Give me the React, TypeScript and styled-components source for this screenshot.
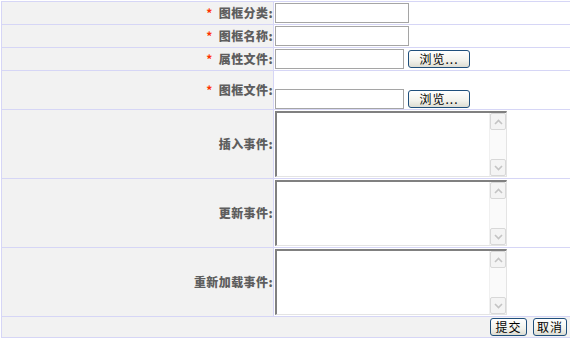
import React from "react";
import styled, { createGlobalStyle } from "styled-components";

const GlobalStyle = createGlobalStyle`
  html, body {
    margin: 0;
    padding: 0;
    overflow: hidden;
    background: #fff;
  }
  body {
    font-family: "Noto Sans CJK SC", "DejaVu Sans", sans-serif;
    font-size: 12px;
  }
`;

const Page = styled.div`
  padding: 1px 0 0 1px;
`;

const FormTable = styled.table`
  width: 572px;
  border-collapse: collapse;
  border: 1px solid #d6d6f6;
  td {
    border: 1px solid #d6d6f6;
    padding: 0;
  }
`;

const Row = styled.tr<{ h: number }>`
  height: ${(p) => p.h}px;
`;

const LabelCell = styled.td`
  width: 271px;
  background: #f2f2f2;
  text-align: right;
  vertical-align: middle;
  font-weight: 900;
  color: #5e5e5e;
  font-size: 12px;
  line-height: 14px;
  letter-spacing: 0.4px;
  white-space: nowrap;
`;

const FieldCell = styled.td<{ $align?: string }>`
  background: #fff;
  vertical-align: ${(p) => p.$align || "middle"};
  padding-left: 1px !important;
`;

const Star = styled.span`
  color: #ff3300;
  font-weight: bold;
  margin-right: 6px;
`;

const TextInput = styled.input<{ w: number }>`
  box-sizing: border-box;
  width: ${(p) => p.w}px;
  height: 20px;
  border: 1px solid #a5a5a5;
  padding: 0 2px;
  margin: 0;
  vertical-align: middle;
  font-size: 12px;
  outline: none;
`;

const FileRow = styled.div<{ $bottom?: boolean }>`
  display: flex;
  align-items: center;
  gap: 4px;
  padding-top: ${(p) => (p.$bottom ? "17px" : "0")};
`;

const XpButton = styled.button<{ w: number }>`
  box-sizing: border-box;
  width: ${(p) => p.w}px;
  height: 18px;
  padding: 0;
  margin: 0;
  border: 1px solid #1f4f7c;
  border-radius: 3px;
  background: linear-gradient(#ffffff, #f2f2ec 60%, #dcdcd2);
  font-family: "Noto Sans CJK SC", sans-serif;
  font-size: 12px;
  line-height: 16px;
  color: #000;
  letter-spacing: 1px;
`;

const TextBox = styled.div`
  box-sizing: border-box;
  width: 232px;
  height: 66px;
  display: flex;
  border-top: 2px solid #808080;
  border-left: 2px solid #808080;
  border-right: 1px solid #e4e4e4;
  border-bottom: 1px solid #e4e4e4;
  background: #fff;
`;

const Area = styled.textarea`
  flex: 1;
  border: none;
  resize: none;
  outline: none;
  padding: 2px;
  font-size: 12px;
`;

const Track = styled.div`
  width: 16px;
  display: flex;
  flex-direction: column;
  justify-content: space-between;
  background: #fafafa;
  border-left: 1px solid #f0f0f0;
`;

const Arrow = styled.div`
  box-sizing: border-box;
  height: 17px;
  border: 1px solid #d8d8d8;
  border-radius: 2px;
  background: #f4f4f4;
  display: flex;
  align-items: center;
  justify-content: center;
`;

const FooterCell = styled.td`
  background: #f2f2f2;
  text-align: right;
  padding-right: 5px !important;
`;

const Actions = styled.div`
  display: flex;
  justify-content: flex-end;
  gap: 6px;
`;

const Chevron = ({ up }: { up?: boolean }) => (
  <svg width="9" height="6" viewBox="0 0 9 6">
    <path
      d={up ? "M1 5 L4.5 1.5 L8 5" : "M1 1 L4.5 4.5 L8 1"}
      fill="none"
      stroke="#c4c4c4"
      strokeWidth="1.6"
    />
  </svg>
);

const EventBox = () => (
  <TextBox>
    <Area />
    <Track>
      <Arrow>
        <Chevron up />
      </Arrow>
      <Arrow>
        <Chevron />
      </Arrow>
    </Track>
  </TextBox>
);

const Label = ({ text, required }: { text: string; required?: boolean }) => (
  <LabelCell>
    {required && <Star>*</Star>}
    {text}:
  </LabelCell>
);

const App = () => {
  return (
    <Page>
      <GlobalStyle />
      <FormTable>
        <tbody>
          <Row h={23}>
            <Label text="图框分类" required />
            <FieldCell>
              <TextInput w={134} />
            </FieldCell>
          </Row>
          <Row h={23}>
            <Label text="图框名称" required />
            <FieldCell>
              <TextInput w={134} />
            </FieldCell>
          </Row>
          <Row h={23}>
            <Label text="属性文件" required />
            <FieldCell>
              <FileRow>
                <TextInput w={129} />
                <XpButton w={62}>浏览...</XpButton>
              </FileRow>
            </FieldCell>
          </Row>
          <Row h={39}>
            <Label text="图框文件" required />
            <FieldCell>
              <FileRow $bottom>
                <TextInput w={129} />
                <XpButton w={62}>浏览...</XpButton>
              </FileRow>
            </FieldCell>
          </Row>
          <Row h={69}>
            <Label text="插入事件" />
            <FieldCell>
              <EventBox />
            </FieldCell>
          </Row>
          <Row h={69}>
            <Label text="更新事件" />
            <FieldCell>
              <EventBox />
            </FieldCell>
          </Row>
          <Row h={69}>
            <Label text="重新加载事件" />
            <FieldCell>
              <EventBox />
            </FieldCell>
          </Row>
          <Row h={21}>
            <FooterCell colSpan={2}>
              <Actions>
                <XpButton w={37}>提交</XpButton>
                <XpButton w={34}>取消</XpButton>
              </Actions>
            </FooterCell>
          </Row>
        </tbody>
      </FormTable>
    </Page>
  );
};

export default App;
